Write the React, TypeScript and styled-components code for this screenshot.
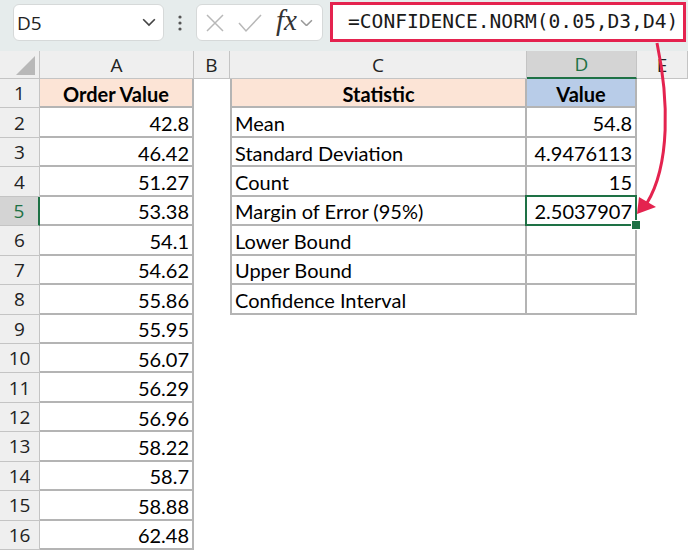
import styled, { createGlobalStyle } from 'styled-components'

const GlobalStyle = createGlobalStyle`
  html, body {
    margin: 0;
    padding: 0;
    background: #ffffff;
  }
`

const COLS = '40px 154px 36px 297px 110px 1fr'
const GRID_LINE = '#c4c4c4'
const TABLE_LINE = '#b4b4b4'
const EXCEL_GREEN = '#1e7145'
const MARK_RED = '#e4234f'

const Page = styled.div`
  position: relative;
  width: 688px;
  height: 553px;
  overflow: hidden;
  font-family: Lato, 'Noto Sans', sans-serif;
`

const TopBar = styled.div`
  height: 51px;
  background: #e6ecec;
  display: flex;
  align-items: center;
  padding-left: 13px;
  box-sizing: border-box;
`

const NameBox = styled.div`
  width: 151px;
  height: 37px;
  box-sizing: border-box;
  background: #fff;
  border: 1px solid #d6d9d9;
  border-radius: 6px;
  display: flex;
  align-items: center;
  justify-content: space-between;
  padding: 0 7px 0 3px;
  margin-top: -6px;
  font-family: 'Open Sans', 'Noto Sans', sans-serif;
  font-size: 19px;
  color: #222;
`

const Divider = styled.div`
  width: 32px;
  display: flex;
  justify-content: center;
  margin-top: -6px;
`

const FxBox = styled.div`
  width: 127px;
  height: 37px;
  box-sizing: border-box;
  background: #fff;
  border: 1px solid #d6d9d9;
  border-radius: 6px;
  display: flex;
  align-items: center;
  padding: 0 4px 0 8px;
  gap: 13px;
  margin-top: -6px;
`

const FxLabel = styled.span`
  font-family: 'Liberation Serif', serif;
  font-style: italic;
  font-size: 29px;
  line-height: 1;
  color: #333;
  margin-left: 1px;
  margin-right: -10px;
  margin-bottom: 4px;
`

const FormulaInput = styled.div`
  margin-left: 7px;
  margin-top: -8px;
  width: 356px;
  height: 40px;
  box-sizing: border-box;
  border: 3px solid ${MARK_RED};
  background: #fff;
  display: flex;
  align-items: center;
  padding-left: 15px;
  font-family: 'DejaVu Sans Mono', monospace;
  font-size: 19.6px;
  color: #1a1a1a;
  white-space: nowrap;
`

const Sheet = styled.div`
  display: grid;
  grid-template-columns: ${COLS};
  grid-template-rows: 28px repeat(16, 29.44px);
`

const Corner = styled.div`
  background: #efefef;
  border-right: 1px solid ${GRID_LINE};
  border-bottom: 1px solid ${GRID_LINE};
  display: flex;
  align-items: flex-end;
  justify-content: flex-end;
  padding: 0 4px 3px 0;
`

const ColHeader = styled.div<{ $active?: boolean }>`
  background: ${(p) => (p.$active ? '#d4d4d4' : '#efefef')};
  color: ${(p) => (p.$active ? EXCEL_GREEN : '#222')};
  border-right: 1px solid ${GRID_LINE};
  border-bottom: ${(p) => (p.$active ? `2px solid ${EXCEL_GREEN}` : `1px solid ${GRID_LINE}`)};
  display: flex;
  align-items: center;
  justify-content: center;
  font-family: 'Open Sans', 'Noto Sans', sans-serif;
  font-size: 19px;
`

const RowHeader = styled.div<{ $active?: boolean }>`
  background: ${(p) => (p.$active ? '#d4d4d4' : '#efefef')};
  color: ${(p) => (p.$active ? EXCEL_GREEN : '#222')};
  border-right: ${(p) => (p.$active ? `2px solid ${EXCEL_GREEN}` : `1px solid ${GRID_LINE}`)};
  border-bottom: 1px solid ${GRID_LINE};
  display: flex;
  align-items: center;
  justify-content: center;
  font-family: 'Open Sans', 'Noto Sans', sans-serif;
  font-size: 19px;
`

const Cell = styled.div<{
  $bordered?: boolean
  $left?: boolean
  $fill?: string
  $align?: 'left' | 'right' | 'center'
  $bold?: boolean
  $selected?: boolean
}>`
  position: relative;
  z-index: ${(p) => (p.$selected ? 2 : 'auto')};
  box-sizing: border-box;
  background: ${(p) => p.$fill ?? '#fff'};
  border-right: ${(p) => (p.$bordered ? `2px solid ${TABLE_LINE}` : 'none')};
  border-bottom: ${(p) => (p.$bordered ? `2px solid ${TABLE_LINE}` : 'none')};
  border-left: ${(p) => (p.$left ? `2px solid ${TABLE_LINE}` : 'none')};
  display: flex;
  align-items: center;
  justify-content: ${(p) =>
    p.$align === 'right' ? 'flex-end' : p.$align === 'center' ? 'center' : 'flex-start'};
  padding: 2px 3px 0 3px;
  font-size: 20px;
  font-weight: ${(p) => (p.$bold ? 700 : 400)};
  color: #000;
  white-space: nowrap;
`

const Selection = styled.div`
  position: absolute;
  inset: -2px -2px -2px -2px;
  border: 2px solid ${EXCEL_GREEN};
  pointer-events: none;
`

const FillHandle = styled.div`
  position: absolute;
  right: -6px;
  bottom: -6px;
  width: 8px;
  height: 8px;
  background: ${EXCEL_GREEN};
  border: 1px solid #fff;
`

const Overlay = styled.svg`
  position: absolute;
  left: 0;
  top: 0;
  z-index: 3;
  pointer-events: none;
`

const orders = ['42.8', '46.42', '51.27', '53.38', '54.1', '54.62', '55.86', '55.95', '56.07', '56.29', '56.96', '58.22', '58.7', '58.88', '62.48']

const stats: [string, string][] = [
  ['Mean', '54.8'],
  ['Standard Deviation', '4.9476113'],
  ['Count', '15'],
  ['Margin of Error (95%)', '2.5037907'],
  ['Lower Bound', ''],
  ['Upper Bound', ''],
  ['Confidence Interval', ''],
]

const PEACH = '#fce4d6'
const BLUE = '#b8cce8'

function Chevron({ size = 12, color = '#444' }: { size?: number; color?: string }) {
  return (
    <svg width={size} height={size * 0.6} viewBox="0 0 12 7">
      <path d="M1 1 L6 6 L11 1" fill="none" stroke={color} strokeWidth="1.4" />
    </svg>
  )
}

export default function App() {
  const rows = []
  for (let r = 1; r <= 16; r++) {
    const isHead = r === 1
    const stat = r >= 2 && r <= 8 ? stats[r - 2] : null
    rows.push(
      <RowHeader key={`h${r}`} $active={r === 5}>
        {r}
      </RowHeader>,
      <Cell
        key={`a${r}`}
        $bordered
        $fill={isHead ? PEACH : undefined}
        $align={isHead ? 'center' : 'right'}
        $bold={isHead}
      >
        {isHead ? 'Order Value' : orders[r - 2]}
      </Cell>,
      <Cell key={`b${r}`} />,
      r <= 8 ? (
        <Cell key={`c${r}`} $bordered $left $fill={isHead ? PEACH : undefined} $align={isHead ? 'center' : 'left'} $bold={isHead}>
          {isHead ? 'Statistic' : stat?.[0]}
        </Cell>
      ) : (
        <Cell key={`c${r}`} />
      ),
      r <= 8 ? (
        <Cell
          key={`d${r}`}
          $bordered
          $selected={r === 5}
          $fill={isHead ? BLUE : undefined}
          $align={isHead ? 'center' : 'right'}
          $bold={isHead}
        >
          {isHead ? 'Value' : stat?.[1]}
          {r === 5 && (
            <Selection>
              <FillHandle />
            </Selection>
          )}
        </Cell>
      ) : (
        <Cell key={`d${r}`} />
      ),
      <Cell key={`e${r}`} />
    )
  }

  return (
    <Page>
      <GlobalStyle />
      <TopBar>
        <NameBox>
          <span>D5</span>
          <Chevron size={14} />
        </NameBox>
        <Divider>
          <svg width="4" height="16" viewBox="0 0 4 16">
            <circle cx="2" cy="2" r="1.6" fill="#555" />
            <circle cx="2" cy="8" r="1.6" fill="#555" />
            <circle cx="2" cy="14" r="1.6" fill="#555" />
          </svg>
        </Divider>
        <FxBox>
          <svg width="20" height="20" viewBox="0 0 20 20">
            <path d="M2 2 L18 18 M18 2 L2 18" stroke="#b8b8b8" strokeWidth="1.5" fill="none" />
          </svg>
          <svg width="24" height="20" viewBox="0 0 24 20">
            <path d="M1 10 L8 18 L23 2" stroke="#b8b8b8" strokeWidth="1.5" fill="none" />
          </svg>
          <FxLabel>fx</FxLabel>
          <Chevron size={13} color="#999" />
        </FxBox>
        <FormulaInput>=CONFIDENCE.NORM(0.05,D3,D4)</FormulaInput>
      </TopBar>
      <Sheet>
        <Corner>
          <svg width="19" height="19" viewBox="0 0 19 19">
            <path d="M19 0 L19 19 L0 19 Z" fill="#b8b8b8" />
          </svg>
        </Corner>
        <ColHeader>A</ColHeader>
        <ColHeader>B</ColHeader>
        <ColHeader>C</ColHeader>
        <ColHeader $active>D</ColHeader>
        <ColHeader>E</ColHeader>
        {rows}
      </Sheet>
      <Overlay width="688" height="553" viewBox="0 0 688 553">
        <path d="M657 43 C669 100, 670 165, 647 203" fill="none" stroke={MARK_RED} strokeWidth="3" />
        <path d="M637 214 L639 197 L656 207 Z" fill={MARK_RED} />
      </Overlay>
    </Page>
  )
}
